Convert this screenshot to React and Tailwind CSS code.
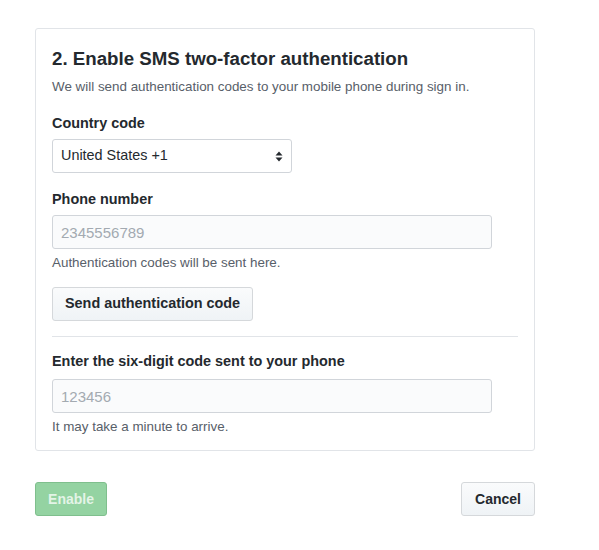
import React from 'react';

const FONT = { fontFamily: '"Liberation Sans", Arial, Helvetica, sans-serif' };

// Champ texte gris clair, comme les inputs GitHub
function TextField({ placeholder }) {
  return (
    <input
      type="text"
      placeholder={placeholder}
      className="block w-[440px] h-[34px] px-[8px] rounded-[3px] border border-[#d1d5da] bg-[#fafbfc] text-[15px] text-[#24292e] placeholder:text-[#a3aab1] outline-none"
    />
  );
}

function SelectArrows() {
  return (
    <svg width="8" height="11" viewBox="0 0 8 11" className="text-[#24292e]">
      <path d="M4 0.5 L7.5 4.5 L0.5 4.5 Z" fill="currentColor" />
      <path d="M4 10.5 L7.5 6.5 L0.5 6.5 Z" fill="currentColor" />
    </svg>
  );
}

export default function App() {
  return (
    <div className="min-h-[550px] bg-white pt-[28px] pl-[35px]" style={FONT}>
      <div className="w-[500px]">
        <div className="border border-[#e1e4e8] rounded-[3px] p-4 pb-[13px]">
          <h2 className="text-[18.7px] leading-[28px] font-semibold text-[#24292e]">
            2. Enable SMS two-factor authentication
          </h2>
          <p className="mt-[4px] text-[13.4px] leading-[20px] text-[#586069]">
            We will send authentication codes to your mobile phone during sign in.
          </p>

          <label className="block mt-[16px] text-[14.4px] leading-[21px] font-semibold text-[#24292e]">
            Country code
          </label>
          <div className="mt-[5px] w-[240px] h-[34px] px-[8px] flex items-center justify-between rounded-[3px] border border-[#d1d5da] bg-white text-[14.4px] text-[#24292e]">
            <span>United States +1</span>
            <SelectArrows />
          </div>

          <label className="block mt-[16px] text-[14.4px] leading-[21px] font-semibold text-[#24292e]">
            Phone number
          </label>
          <div className="mt-[5px]">
            <TextField placeholder="2345556789" />
          </div>
          <p className="mt-[4px] text-[13.4px] leading-[20px] text-[#586069]">
            Authentication codes will be sent here.
          </p>

          <button
            type="button"
            className="mt-[14px] h-[34px] px-[12px] rounded-[3px] border border-[#d5d8db] bg-gradient-to-b from-[#fafbfc] to-[#eff3f6] text-[14.4px] font-semibold text-[#24292e]"
          >
            Send authentication code
          </button>

          <div className="mt-[15px] h-px bg-[#e1e4e8]" />

          <label className="block mt-[14px] text-[14.4px] leading-[21px] font-semibold text-[#24292e]">
            Enter the six-digit code sent to your phone
          </label>
          <div className="mt-[7px]">
            <TextField placeholder="123456" />
          </div>
          <p className="mt-[4px] text-[13.4px] leading-[20px] text-[#586069]">
            It may take a minute to arrive.
          </p>
        </div>

        <div className="mt-[31px] flex justify-between">
          <button
            type="button"
            disabled
            className="w-[72px] h-[34px] rounded-[3px] border border-[#7fbf8d] bg-[#94d3a2] text-[14px] font-semibold text-white/75"
          >
            Enable
          </button>
          <button
            type="button"
            className="w-[74px] h-[34px] rounded-[3px] border border-[#d5d8db] bg-gradient-to-b from-[#fafbfc] to-[#eff3f6] text-[14px] font-semibold text-[#24292e]"
          >
            Cancel
          </button>
        </div>
      </div>
    </div>
  );
}
